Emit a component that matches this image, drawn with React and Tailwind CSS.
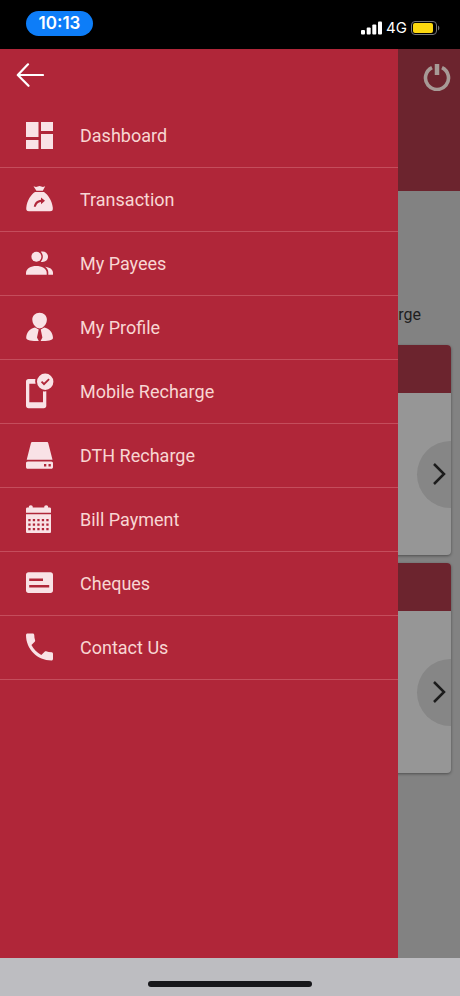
import React from "react";

const icons = {
  dashboard: (
    <>
      <path d="M0 2h12.500v15H0zM0 20h12.500v9H0zM15 2h12v9H15zM15 14h12v15H15z" />
    </>
  ),
  transaction: (
    <>
      <path d="M7.500 2.200 10 3l3.500-1 3.500 1 2.200-.8-2.400 4.600h-6.400z" />
      <path
        fillRule="evenodd"
        d="M9 8h9c4 2.600 8 8.700 8.800 15.500.3 2.700-.4 3.800-2.800 3.800H3C.6 27.300 0 26 .3 23.500 1 16.500 5 10.600 9 8zM15 13.500v2.300c-4 .3-6.600 3-7.200 7h2c.6-2.900 2.300-4.600 5.200-4.900v2.300l4-3.400z"
      />
    </>
  ),
  payees: (
    <>
      <circle cx="10.4" cy="8.700" r="5" />
      <path d="M14.800 3.700c4-.9 7.200 1.500 7.200 5s-3.200 5.900-7.200 5c2.700-3 2.700-7 0-10z" />
      <path d="M0 26.700v-2C0 20.500 5 18 10.300 18s10.400 2.500 10.400 6.700v2z" />
      <path d="M19 18.700c4.500.4 8 2.600 8 6v2h-4.700v-2.400c0-2.400-1.200-4.300-3.300-5.600z" />
    </>
  ),
  profile: (
    <>
      <path d="M13.600.700c4.300 0 7.300 3.100 7.300 7 0 3.700-2.200 6-4.600 8l-2.700.8-2.700-.8c-2.400-2-4.600-4.300-4.600-8 0-3.900 3-7 7.300-7z" />
      <path d="M9 15.500 12.700 17.500 11 25.500 12.800 29C6 29 .2 28.500.2 26 .2 20.500 4 16.500 9 15.500zM18.200 15.500 14.700 17.500 16.400 25.500 14.600 29C21.400 29 27 28.500 27 26c0-5.500-3.800-9.500-8.800-10.500z" />
    </>
  ),
  mobile: (
    <>
      <path
        fillRule="evenodd"
        d="M2.500 3H9.400c-.4 1.600-.3 3.200.2 4.700H3.300v18.600H17V15.200c1 .2 2.200.3 3.300.1v14.500c0 1.500-1 2.500-2.500 2.500H2.500C1 32.300 0 31.300 0 29.800V5.500C0 4 1 3 2.500 3z"
      />
      <path
        fillRule="evenodd"
        d="M19.200-2.400a8.200 8.200 0 1 1 0 16.400 8.200 8.200 0 1 1 0-16.400zM14.900 6.300 18 9.400l5.700-5.600-1.200-1.300L18 6.800l-1.800-1.900z"
      />
    </>
  ),
  dth: (
    <>
      <path d="M6.500 2h14.300c.9 0 1.300.4 1.500 1.200L26.500 19.700H.7L4.900 3.200C5.100 2.400 5.600 2 6.500 2z" />
      <path
        fillRule="evenodd"
        d="M1.800 21.500h23.400c1.200 0 1.800.7 1.800 1.800V27c0 1.200-.6 1.800-1.800 1.800H1.800C.6 28.800 0 28.200 0 27v-3.700c0-1.100.6-1.800 1.800-1.800zM18 24v2.400h2.300V24zM22.500 24v2.400h2.300V24z"
      />
    </>
  ),
  bill: (
    <>
      <path d="M1.500 3.500h1.300c0-1.300.7-2.200 2-2.200s2 .9 2 2.200h11.400c0-1.300.7-2.200 2-2.200s2 .9 2 2.200h1.300c1 0 1.500.5 1.500 1.500v3.700H0V5c0-1 .5-1.500 1.500-1.500z" />
      <path
        fillRule="evenodd"
        d="M0 10.300h25v17.200c0 1-.5 1.500-1.500 1.500h-22C.5 29 0 28.500 0 27.500zM2.300 15v2.300h2.300V15zM6.800 15v2.300h2.300V15zM11.300 15v2.300h2.300V15zM15.800 15v2.300h2.300V15zM20.300 15v2.300h2.300V15zM2.300 19.500v2.300h2.300v-2.300zM6.800 19.500v2.300h2.300v-2.300zM11.300 19.500v2.300h2.300v-2.300zM15.800 19.500v2.300h2.300v-2.300zM20.300 19.500v2.300h2.300v-2.300zM2.300 24v2.300h2.300V24zM6.800 24v2.300h2.300V24zM11.300 24v2.300h2.300V24zM15.800 24v2.300h2.300V24zM20.300 24v2.300h2.300V24z"
      />
    </>
  ),
  cheques: (
    <path
      fillRule="evenodd"
      d="M2.500 4.300h22C26 4.300 27 5.300 27 6.800v15.700c0 1.500-1 2.500-2.500 2.500h-22C1 25 0 24 0 22.500V6.800c0-1.500 1-2.500 2.500-2.500zM3.200 10.600v2.500H17v-2.500zM3.200 17v2.500h20V17z"
    />
  ),
  contact: (
    <path
      transform="translate(-4.500 -3.100) scale(1.500)"
      d="M6.620 10.790c1.440 2.830 3.760 5.140 6.590 6.590l2.200-2.200c.27-.27.67-.36 1.020-.24 1.120.37 2.330.57 3.570.57.55 0 1 .45 1 1V20c0 .55-.45 1-1 1-9.390 0-17-7.610-17-17 0-.55.45-1 1-1h3.500c.55 0 1 .45 1 1 0 1.250.2 2.450.57 3.570.11.35.03.74-.25 1.020l-2.200 2.200z"
    />
  ),
};

const items = [
  ["dashboard", "Dashboard"],
  ["transaction", "Transaction"],
  ["payees", "My Payees"],
  ["profile", "My Profile"],
  ["mobile", "Mobile Recharge"],
  ["dth", "DTH Recharge"],
  ["bill", "Bill Payment"],
  ["cheques", "Cheques"],
  ["contact", "Contact Us"],
];

function StatusBar() {
  return (
    <header className="flex h-[49px] items-start justify-between bg-black pt-[11px] pr-5 pl-[26px] font-['Inter',sans-serif] text-white">
      <div className="flex h-[25px] w-[67px] items-center justify-center rounded-full bg-[#0d7df8] text-[17px] font-semibold">
        10:13
      </div>
      <div className="flex h-[34px] items-center gap-1">
        <svg className="h-[14px] w-[21px]" viewBox="0 0 21 14" fill="#fff" aria-hidden="true">
          <rect x="0" y="9" width="4" height="4.500" rx="1" />
          <rect x="5.700" y="6.500" width="4" height="7" rx="1" />
          <rect x="11.300" y="3.500" width="4" height="10" rx="1" />
          <rect x="17" y="0.500" width="4" height="13" rx="1" />
        </svg>
        <span className="text-[15px]">4G</span>
        <svg className="h-[14px] w-[29px]" viewBox="0 0 29 14" aria-hidden="true">
          <rect x="0.500" y="0.500" width="25" height="13" rx="3.500" fill="none" stroke="#77777a" />
          <rect x="2" y="2" width="20" height="10" rx="2" fill="#fcd80f" />
          <path d="M27 4.500c1.800.8 1.800 4.200 0 5z" fill="#77777a" />
        </svg>
      </div>
    </header>
  );
}

function Card() {
  return (
    <section className="flex h-[210px] flex-col overflow-hidden rounded-sm bg-[#969696] shadow-[0_1px_3px_rgba(0,0,0,0.4)]">
      <div className="h-12 bg-[#6c242e]" />
      <div className="flex flex-1 items-center justify-end">
        <button
          type="button"
          aria-label="Next"
          className="flex h-[67px] w-[34px] items-center justify-center rounded-l-full bg-[#868686] pl-3"
        >
          <svg className="h-6 w-4" viewBox="0 0 16 24" fill="none" stroke="#1c1c1c" strokeWidth="2.500" aria-hidden="true">
            <path d="M2 2l10 10L2 22" />
          </svg>
        </button>
      </div>
    </section>
  );
}

function Page() {
  return (
    <div className="flex-1 bg-[#828282]">
      <div className="flex h-[142px] items-start justify-end bg-[#6c242e] pt-[14px] pr-[9px]">
        <button type="button" aria-label="Log out">
          <svg className="h-7 w-7" viewBox="0 0 28 28" fill="none" stroke="#a79a96" aria-hidden="true">
            <path d="M9 4.600A11.500 11.500 0 1 0 19 4.600" strokeWidth="3.600" />
            <path d="M14 1v11" strokeWidth="4.500" />
          </svg>
        </button>
      </div>
      <p className="pt-28 pr-[39px] text-right text-base leading-6 text-[#1e1e1e]">Recharge</p>
      <div className="flex flex-col gap-2 pt-[18px] pr-[9px]">
        <Card />
        <Card />
      </div>
    </div>
  );
}

function Drawer() {
  return (
    <aside className="absolute inset-y-0 right-[62px] left-0 bg-[#b02639]">
      <div className="flex h-[55px] items-start pt-[14px] pl-4">
        <button type="button" aria-label="Back">
          <svg
            className="h-6 w-7"
            viewBox="0 0 28 24"
            fill="none"
            stroke="#fff"
            strokeWidth="2.200"
            strokeLinecap="round"
            strokeLinejoin="round"
            aria-hidden="true"
          >
            <path d="M27 12H2M12 1.300 1.800 12 12.500 22.800" />
          </svg>
        </button>
      </div>
      <nav>
        <ul>
          {items.map(([icon, label]) => (
            <li key={icon}>
              <a
                href="#"
                className="flex h-16 items-center gap-[26px] border-b border-[#c44d5c] pl-[26px] text-lg text-[#f8d6d3]"
              >
                <svg className="h-[31px] w-7 overflow-visible" viewBox="0 0 28 31" fill="#f9e2e6" aria-hidden="true">
                  {icons[icon]}
                </svg>
                {label}
              </a>
            </li>
          ))}
        </ul>
      </nav>
    </aside>
  );
}

export default function App() {
  return (
    <div className="flex min-h-screen flex-col font-['Roboto',sans-serif]">
      <StatusBar />
      <main className="relative flex flex-1 flex-col">
        <Page />
        <Drawer />
      </main>
      <footer className="flex h-[38px] items-end justify-center bg-[#bdbdc1] pb-[9px]">
        <div className="h-[6px] w-[164px] rounded-full bg-[#17171a]" />
      </footer>
    </div>
  );
}
